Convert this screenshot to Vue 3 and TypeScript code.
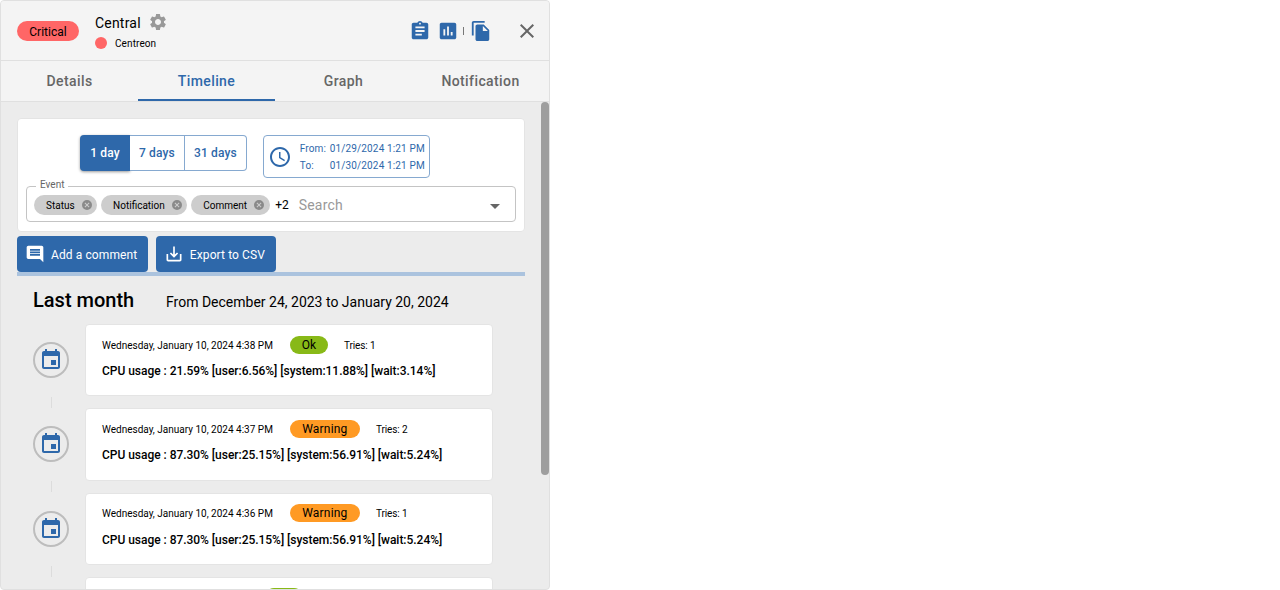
<script setup lang="ts">
const tabs = ['Details', 'Timeline', 'Graph', 'Notification']
const chips = ['Status', 'Notification', 'Comment']
const periods = ['1 day', '7 days', '31 days']

const events = [
  { date: 'Wednesday, January 10, 2024 4:38 PM', status: 'Ok', tries: 1, text: 'CPU usage : 21.59% [user:6.56%] [system:11.88%] [wait:3.14%]' },
  { date: 'Wednesday, January 10, 2024 4:37 PM', status: 'Warning', tries: 2, text: 'CPU usage : 87.30% [user:25.15%] [system:56.91%] [wait:5.24%]' },
  { date: 'Wednesday, January 10, 2024 4:36 PM', status: 'Warning', tries: 1, text: 'CPU usage : 87.30% [user:25.15%] [system:56.91%] [wait:5.24%]' },
  { date: 'Friday, January 10, 2024 4:35 PM', status: 'Ok', tries: 1, text: 'CPU usage : 21.59% [user:6.56%] [system:11.88%] [wait:3.14%]' }
]
</script>

<template>
  <div class="panel">
    <header class="head">
      <span class="badge-critical">Critical</span>
      <div class="host">
        <div class="host-name">
          <span>Central</span>
          <svg class="gear" viewBox="0 0 24 24" width="20" height="20"><path d="M19.14 12.94c.04-.3.06-.61.06-.94 0-.32-.02-.64-.07-.94l2.03-1.58a.49.49 0 0 0 .12-.61l-1.92-3.32a.488.488 0 0 0-.59-.22l-2.39.96c-.5-.38-1.03-.7-1.62-.94l-.36-2.54a.484.484 0 0 0-.48-.41h-3.84c-.24 0-.43.17-.47.41l-.36 2.54c-.59.24-1.13.57-1.62.94l-2.39-.96c-.22-.08-.47 0-.59.22L2.74 8.87c-.12.21-.08.47.12.61l2.03 1.58c-.05.3-.09.63-.09.94s.02.64.07.94l-2.03 1.58a.49.49 0 0 0-.12.61l1.92 3.32c.12.22.37.29.59.22l2.39-.96c.5.38 1.03.7 1.62.94l.36 2.54c.05.24.24.41.48.41h3.84c.24 0 .44-.17.47-.41l.36-2.54c.59-.24 1.13-.56 1.62-.94l2.39.96c.22.08.47 0 .59-.22l1.92-3.32c.12-.22.07-.47-.12-.61l-2.01-1.58zM12 15.6c-1.98 0-3.6-1.62-3.6-3.6s1.62-3.6 3.6-3.6 3.6 1.62 3.6 3.6-1.62 3.6-3.6 3.6z"/></svg>
        </div>
        <div class="host-parent"><i class="dot"></i><span>Centreon</span></div>
      </div>
      <div class="head-actions">
        <svg class="ico" viewBox="0 0 24 24" width="22" height="22"><path d="M19 3h-4.18C14.4 1.84 13.3 1 12 1s-2.4.84-2.82 2H5c-1.1 0-2 .9-2 2v14c0 1.1.9 2 2 2h14c1.1 0 2-.9 2-2V5c0-1.1-.9-2-2-2zm-7 0c.55 0 1 .45 1 1s-.45 1-1 1-1-.45-1-1 .45-1 1-1zm2 14H7v-2h7v2zm3-4H7v-2h10v2zm0-4H7V7h10v2z"/></svg>
        <svg class="ico ico-chart" viewBox="0 0 24 24" width="22" height="22"><path d="M19 3H5c-1.1 0-2 .9-2 2v14c0 1.1.9 2 2 2h14c1.1 0 2-.9 2-2V5c0-1.1-.9-2-2-2zM9 17H7v-7h2v7zm4 0h-2V7h2v10zm4 0h-2v-4h2v4z"/></svg>
        <span class="sep"></span>
        <svg class="ico ico-copy" viewBox="0 0 24 24" width="22" height="22"><path d="M16 1H4c-1.1 0-2 .9-2 2v14h2V3h12V1zm-1 4 6 6v10c0 1.1-.9 2-2 2H7.99C6.89 23 6 22.1 6 21l.01-14c0-1.1.89-2 1.99-2h7zm-1 7h5.5L14 6.5V12z"/></svg>
        <svg class="close" viewBox="0 0 24 24" width="24" height="24"><path d="M19 6.41 17.59 5 12 10.59 6.41 5 5 6.41 10.59 12 5 17.59 6.41 19 12 13.41 17.59 19 19 17.59 13.41 12z"/></svg>
      </div>
    </header>

    <nav class="tabs">
      <div v-for="t in tabs" :key="t" class="tab" :class="{ active: t === 'Timeline' }">{{ t }}</div>
    </nav>

    <main class="body">
      <section class="filters">
        <div class="period-row">
          <div class="periods">
            <button v-for="p in periods" :key="p" class="period" :class="{ on: p === '1 day' }">{{ p }}</button>
          </div>
          <div class="range">
            <svg viewBox="0 0 24 24" width="24" height="24"><path d="M11.99 2C6.47 2 2 6.48 2 12s4.47 10 9.99 10C17.52 22 22 17.52 22 12S17.52 2 11.99 2zM12 20c-4.42 0-8-3.58-8-8s3.58-8 8-8 8 3.58 8 8-3.58 8-8 8zm.5-13H11v6l5.25 3.15.75-1.23-4.5-2.67z"/></svg>
            <div class="range-grid">
              <span>From:</span><span>01/29/2024 1:21 PM</span>
              <span>To:</span><span>01/30/2024 1:21 PM</span>
            </div>
          </div>
        </div>
        <fieldset class="event-field">
          <legend>Event</legend>
          <span v-for="c in chips" :key="c" class="chip">
            {{ c }}
            <svg viewBox="0 0 24 24" width="12" height="12"><path d="M12 2a10 10 0 1 0 0 20 10 10 0 0 0 0-20zm5 13.59L15.59 17 12 13.41 8.41 17 7 15.59 10.59 12 7 8.41 8.41 7 12 10.59 15.59 7 17 8.41 13.41 12 17 15.59z"/></svg>
          </span>
          <span class="more">+2</span>
          <span class="placeholder">Search</span>
          <i class="caret"></i>
        </fieldset>
      </section>

      <div class="buttons">
        <button class="btn">
          <svg viewBox="0 0 24 24" width="20" height="20"><path d="M21.99 4c0-1.1-.89-2-1.99-2H4c-1.1 0-2 .9-2 2v12c0 1.1.9 2 2 2h14l4 4-.01-18zM18 14H6v-2h12v2zm0-3H6V9h12v2zm0-3H6V6h12v2z"/></svg>
          <span>Add a comment</span>
        </button>
        <button class="btn">
          <svg viewBox="0 0 24 24" width="20" height="20"><path d="M19 12v7H5v-7H3v7c0 1.1.9 2 2 2h14c1.1 0 2-.9 2-2v-7h-2zm-6 .67 2.59-2.58L17 11.5l-5 5-5-5 1.41-1.41L11 12.67V3h2v9.67z"/></svg>
          <span>Export to CSV</span>
        </button>
      </div>
      <div class="bar"></div>

      <div class="month">
        <h2>Last month</h2>
        <span>From December 24, 2023 to January 20, 2024</span>
      </div>

      <ul class="timeline">
        <li v-for="(e, i) in events" :key="i" class="item">
          <div class="rail">
            <div class="circle">
              <svg viewBox="0 0 24 24" width="24" height="24"><path d="M17 12h-5v5h5v-5zM16 1v2H8V1H6v2H5c-1.11 0-1.99.9-1.99 2L3 19c0 1.1.89 2 2 2h14c1.1 0 2-.9 2-2V5c0-1.1-.9-2-2-2h-1V1h-2zm3 18H5V8h14v11z"/></svg>
            </div>
          </div>
          <div class="card">
            <div class="meta">
              <span class="date">{{ e.date }}</span>
              <span class="status" :class="e.status === 'Ok' ? 'ok' : 'warn'">{{ e.status }}</span>
              <span class="tries">Tries: {{ e.tries }}</span>
            </div>
            <div class="output">{{ e.text }}</div>
          </div>
        </li>
      </ul>

      <div class="scrollbar"></div>
    </main>
  </div>
</template>

<style>
html, body { background: #fff; overflow: hidden; }
</style>

<style scoped>
.panel {
  width: 548px;
  height: 588px;
  border: 1px solid #e0e0e0;
  border-radius: 4px;
  overflow: hidden;
  display: flex;
  flex-direction: column;
  background: #ececec;
  font-family: Roboto, sans-serif;
  color: #000;
}

.head {
  height: 59px;
  flex-shrink: 0;
  display: flex;
  align-items: center;
  padding-left: 16px;
  background: #f4f4f4;
  border-bottom: 1px solid #e0e0e0;
}
.badge-critical {
  width: 62px;
  height: 20px;
  line-height: 22px;
  border-radius: 10px;
  background: #ff6666;
  font-size: 12px;
  text-align: center;
}
.host { margin-left: 16px; }
.host-name { display: flex; align-items: center; gap: 7px; font-size: 14px; height: 22px; letter-spacing: 0.2px; margin-bottom: 1px; }
.gear { fill: #999; margin-top: -2px; }
.host-parent { display: flex; align-items: center; gap: 8px; font-size: 10px; margin-top: 3px; letter-spacing: 0.1px; }
.dot { width: 12px; height: 12px; border-radius: 50%; background: #ff6666; }
.head-actions { margin-left: auto; display: flex; align-items: center; padding-right: 10px; }
.ico { fill: #2e68aa; margin-right: 6px; }
.ico-chart { margin-right: 4px; }
.ico-copy { margin-right: 0; }
.sep { width: 1px; height: 8px; background: #777; margin-right: 6px; }
.close { fill: #666; margin-left: 23px; }

.tabs {
  display: grid;
  grid-template-columns: repeat(4, 137px);
  height: 40px;
  flex-shrink: 0;
  background: #f4f4f4;
  border-bottom: 1px solid #e0e0e0;
}
.tab {
  text-align: center;
  line-height: 40px;
  font-size: 14px;
  font-weight: 500;
  color: #666;
  letter-spacing: 0.4px;
}
.tab.active { color: #2e68aa; box-shadow: inset 0 -2px 0 #2e68aa; }

.body { position: relative; flex: 1; overflow: hidden; padding: 16px 24px 0 16px; }

.filters {
  height: 114px;
  box-sizing: border-box;
  background: #fff;
  border: 1px solid #e4e4e4;
  border-radius: 4px;
  padding: 16px 8px 0;
}
.period-row { display: flex; align-items: flex-start; padding-left: 54px; }
.periods { display: flex; height: 36px; box-sizing: border-box; }
.period {
  height: 36px;
  padding: 0 9px;
  border: 1px solid #86a9d0;
  border-left: none;
  background: #fff;
  color: #2e68aa;
  font: 500 12px Roboto, sans-serif;
  letter-spacing: 0.15px;
}
.period:last-child { border-radius: 0 4px 4px 0; }
.period.on {
  background: #2e68aa;
  border: none;
  color: #fff;
  border-radius: 4px 0 0 4px;
  width: 50px;
  padding: 0;
  box-shadow: 0 1px 3px rgba(0, 0, 0, 0.4);
}
.range {
  margin-left: 16px;
  width: 167px;
  height: 43px;
  box-sizing: border-box;
  border: 1px solid #86a9d0;
  border-radius: 4px;
  display: flex;
  align-items: center;
  padding-left: 4px;
  color: #2e68aa;
}
.range svg { fill: #2e68aa; flex-shrink: 0; }
.range-grid {
  margin-left: 8px;
  margin-top: 2px;
  display: grid;
  grid-template-columns: 30px auto;
  row-gap: 5px;
  font-size: 10px;
  line-height: 12px;
  letter-spacing: 0.14px;
  white-space: nowrap;
}
.event-field {
  margin: 0;
  margin-top: 1px;
  height: 43px;
  box-sizing: border-box;
  border: 1px solid #c4c4c4;
  border-radius: 4px;
  padding: 0 7px 4px 7px;
  display: flex;
  align-items: center;
  position: relative;
  min-width: 0;
}
.event-field legend { font-size: 10px; color: #666; padding: 0 4px 2px; margin-left: 2px; line-height: 12px; }
.chip {
  display: inline-flex;
  align-items: center;
  height: 20px;
  border-radius: 10px;
  background: #cdcdcd;
  font-size: 10px;
  padding: 0 4.5px 0 12px;
  gap: 6px;
  margin-right: 4px;
  white-space: nowrap;
}
.chip svg { fill: #8a8a8a; }
.more { font-size: 12px; margin-left: 1.5px; }
.placeholder { font-size: 14px; color: #999; margin-left: 10px; letter-spacing: 0.2px; }
.caret {
  position: absolute;
  right: 15px;
  top: 11px;
  border: 5px solid transparent;
  border-top-color: #666;
  border-bottom: none;
}

.buttons { display: flex; gap: 8px; margin-top: 4px; }
.btn {
  height: 36px;
  display: inline-flex;
  align-items: center;
  gap: 6px;
  padding: 0 10.6px 0 8px;
  background: #2e68aa;
  color: #fff;
  border: none;
  border-radius: 4px;
  font: 400 12px Roboto, sans-serif;
  letter-spacing: 0.1px;
}
.btn svg { fill: #fff; }
.btn span { padding-top: 2px; }
.bar { height: 4px; background: #abc3de; }

.month { display: flex; align-items: baseline; margin: 11px 0 0 16px; height: 37px; }
.month h2 { margin: 0; font-size: 20px; font-weight: 500; line-height: 26px; width: 133px; }
.month span { font-size: 14px; }

.timeline { list-style: none; margin: 0 0 0 16px; padding: 0; }
.item { display: flex; height: 72.33px; margin-bottom: 12px; position: relative; }
.item::after {
  content: '';
  position: absolute;
  left: 18px;
  top: 73px;
  width: 1px;
  height: 11px;
  background: #dcdcdc;
}
.rail { width: 52px; flex-shrink: 0; }
.circle {
  margin-top: 18px;
  width: 36px;
  height: 36px;
  box-sizing: border-box;
  border: 2px solid #bdbdbd;
  border-radius: 50%;
  display: flex;
  align-items: center;
  justify-content: center;
}
.circle svg { fill: #2e68aa; }
.card {
  width: 408px;
  box-sizing: border-box;
  background: #fff;
  border: 1px solid #e4e4e4;
  border-radius: 4px;
  padding: 10px 16px;
}
.meta { display: flex; align-items: center; height: 19px; font-size: 10px; }
.date { padding-top: 1px; margin-right: 17px; white-space: nowrap; }
.status { height: 18px; line-height: 18px; border-radius: 9px; font-size: 12px; text-align: center; }
.ok { width: 38px; background: #88b917; }
.warn { width: 70px; background: #ff9a24; letter-spacing: 0.2px; }
.tries { margin-left: 16px; padding-top: 1px; letter-spacing: -0.1px; }
.output { margin-top: 10px; font-size: 12px; font-weight: 500; white-space: nowrap; letter-spacing: -0.03px; }

.scrollbar {
  position: absolute;
  right: 0;
  top: 0;
  width: 8px;
  height: 373px;
  border-radius: 4px;
  background: #9e9e9e;
}
</style>
